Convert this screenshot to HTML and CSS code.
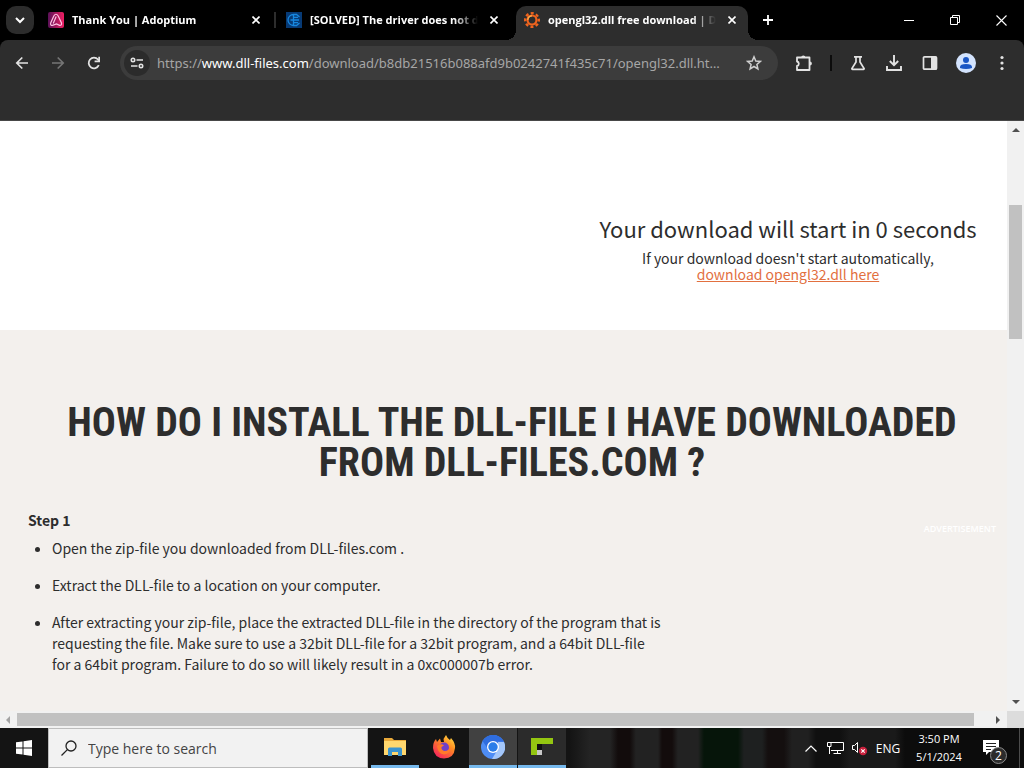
FILE: index.html
```
<!DOCTYPE html>
<html lang="en">
<head>
    <meta charset="UTF-8">
    <meta name="viewport" content="width=device-width, initial-scale=1.0">
    <title>opengl32.dll free download | DLL-files.com</title>
    <link rel="stylesheet" href="styles.css">
</head>
<body>
    <!-- Tab strip -->
    <header class="tab-strip">
        <button class="tab-search" aria-label="Search tabs">
            <svg width="10" height="10" viewBox="0 0 10 10"><path d="M1 3l4 4 4-4" fill="none" stroke="#fff" stroke-width="2"/></svg>
        </button>
        <div class="tabs">
            <div class="tab">
                <svg class="favicon" viewBox="0 0 16 16">
                    <defs><linearGradient id="adopt" x1="0" x2="1"><stop offset="0" stop-color="#5a1158"/><stop offset="1" stop-color="#ee1f62"/></linearGradient></defs>
                    <rect width="16" height="16" rx="2" fill="url(#adopt)"/>
                    <path d="M5.800 4Q8 .5 10.200 4L13.500 11Q14 13.500 11.500 13.300L8.500 12 4.500 13.400Q2 13.400 2.700 11zM8.200 4.500L5.200 11.500" fill="none" stroke="#ffc2e2" stroke-width="1.200"/>
                </svg>
                <span class="tab-title">Thank You | Adoptium</span>
                <button class="tab-close" aria-label="Close tab"><svg width="8" height="8" viewBox="0 0 8 8"><path d="M.5.5l7 7M7.500.5l-7 7" stroke="#fff" stroke-width="1.600"/></svg></button>
            </div>
            <span class="tab-divider"></span>
            <div class="tab">
                <svg class="favicon" viewBox="0 0 16 16">
                    <rect width="16" height="16" fill="#073a75"/>
                    <path d="M7.500 2.500A5.500 5.500 0 0 0 7.500 13.500zM7.500 2.500H10.500L13.500 5M7.500 5.300H12M4.500 8H13M7.500 10.700H12M7.500 13.500H10.500L13.500 11" fill="none" stroke="#1787df" stroke-width="1.300"/>
                </svg>
                <span class="tab-title">[SOLVED] The driver does not detect</span>
                <button class="tab-close" aria-label="Close tab"><svg width="8" height="8" viewBox="0 0 8 8"><path d="M.5.5l7 7M7.500.5l-7 7" stroke="#fff" stroke-width="1.600"/></svg></button>
            </div>
            <span class="tab-divider tab-divider-hidden"></span>
            <div class="tab tab-active">
                <svg class="favicon" viewBox="0 0 16 16">
                    <circle cx="8" cy="8" r="4.500" fill="none" stroke="#f0641e" stroke-width="2.200"/>
                    <circle cx="8" cy="8" r="6.800" fill="none" stroke="#f0641e" stroke-width="2.400" stroke-dasharray="3 2.340" stroke-dashoffset="1.500"/>
                    <path d="M8 3.800a4.200 4.200 0 0 0-4.200 4.200" fill="none" stroke="#ffb04a" stroke-width="1.200"/>
                </svg>
                <span class="tab-title">opengl32.dll free download | DLL-files.com</span>
                <button class="tab-close" aria-label="Close tab"><svg width="8" height="8" viewBox="0 0 8 8"><path d="M.5.5l7 7M7.500.5l-7 7" stroke="#fff" stroke-width="1.600"/></svg></button>
            </div>
        </div>
        <button class="new-tab" aria-label="New tab"><svg width="12" height="12" viewBox="0 0 12 12"><path d="M6 1v10M1 6h10" stroke="#fff" stroke-width="1.800"/></svg></button>
        <div class="window-controls">
            <button aria-label="Minimize"><svg width="10" height="10" viewBox="0 0 10 10"><path d="M0 5.500h10" stroke="#fff"/></svg></button>
            <button aria-label="Restore"><svg width="10" height="10" viewBox="0 0 10 10"><path d="M.5 2.500h7v7h-7zM2.500 2.500v-2h7v7h-2" fill="none" stroke="#fff"/></svg></button>
            <button aria-label="Close"><svg width="11" height="11" viewBox="0 0 11 11"><path d="M.5.5l10 10M10.500.5l-10 10" stroke="#fff" stroke-width="1.100"/></svg></button>
        </div>
    </header>

    <!-- Address bar and extensions -->
    <div class="chrome">
        <nav class="toolbar">
            <button aria-label="Back"><svg width="14" height="14" viewBox="0 0 14 14"><path d="M13 7H2M7.300 1.500L1.800 7l5.500 5.500" fill="none" stroke="#e3e3e3" stroke-width="1.700"/></svg></button>
            <button aria-label="Forward"><svg width="14" height="14" viewBox="0 0 14 14"><path d="M1 7h11M6.700 1.500L12.200 7l-5.500 5.500" fill="none" stroke="#757575" stroke-width="1.700"/></svg></button>
            <button aria-label="Reload"><svg width="14" height="14" viewBox="0 0 14 14"><path d="M11.800 9.200A5.300 5.300 0 1 1 11 3.500L12 4.600" fill="none" stroke="#e3e3e3" stroke-width="1.800"/><path d="M13 .8v5.400H7.600V4.500h3.700V.8z" fill="#e3e3e3"/></svg></button>
            <div class="omnibox">
                <button class="site-info" aria-label="Site information"><svg width="14" height="12" viewBox="0 0 14 12"><g fill="none" stroke="#e3e3e3" stroke-width="1.600"><circle cx="3" cy="3" r="1.700"/><path d="M6.500 3H13M1 9h6.500"/><circle cx="11" cy="9" r="1.700"/></g></svg></button>
                <a class="url" href="#">https://<span class="host">www.dll-files.com</span>/download/b8db21516b088afd9b0242741f435c71/opengl32.dll.html</a>
                <button class="bookmark" aria-label="Bookmark this tab"><svg width="16" height="16" viewBox="0 0 16 16"><path d="M8 1.800l1.800 4.200 4.500.4-3.400 3 1 4.500L8 11.500l-3.900 2.400 1-4.500-3.400-3 4.500-.4z" fill="none" stroke="#cfcfcf" stroke-width="1.500"/></svg></button>
            </div>
            <button aria-label="Extensions"><svg width="18" height="18" viewBox="0 0 18 18"><path d="M2 3.500H14.500V16H2V12A2.300 2.300 0 0 0 2 7.500z" fill="none" stroke="#e3e3e3" stroke-width="1.800" stroke-linejoin="round"/><path d="M6.200 3.500a2.100 2.100 0 0 1 4.200 0zM14.800 7.400a2.100 2.100 0 0 1 0 4.200z" fill="#e3e3e3"/></svg></button>
            <span class="toolbar-divider"></span>
            <button aria-label="Experiments"><svg width="16" height="16" viewBox="0 0 16 16"><path d="M4 1.800h8M6 2v5L1.900 13.500Q1.700 14.300 2.500 14.300H13.500Q14.300 14.300 14.100 13.500L10 7V2" fill="none" stroke="#e3e3e3" stroke-width="1.700"/></svg></button>
            <button aria-label="Downloads"><svg width="16" height="16" viewBox="0 0 16 16"><path d="M8 0v9.500M3.800 6L8 10.200 12.200 6M1 11v4h14v-4" fill="none" stroke="#e3e3e3" stroke-width="1.900"/></svg></button>
            <button aria-label="Side panel"><svg width="16" height="16" viewBox="0 0 16 16"><rect x="1.500" y="1.800" width="13" height="12.400" rx="1" fill="none" stroke="#e3e3e3" stroke-width="1.700"/><path d="M9 1.800h5.500v12.400H9z" fill="#e3e3e3"/></svg></button>
            <button aria-label="Profile"><svg width="20" height="20" viewBox="0 0 20 20"><circle cx="10" cy="10" r="10" fill="#d3e3fd"/><circle cx="10" cy="7" r="3" fill="#1a56c4"/><path d="M4 15v-1Q4 11 10 11t6 3v1q-2.500 1-6 1t-6-1z" fill="#1a56c4"/></svg></button>
            <button aria-label="Menu"><svg width="4" height="16" viewBox="0 0 4 16"><g fill="#e3e3e3"><circle cx="2" cy="2.500" r="1.600"/><circle cx="2" cy="8" r="1.600"/><circle cx="2" cy="13.500" r="1.600"/></g></svg></button>
        </nav>
    </div>

    <!-- Page -->
    <div class="viewport">
        <main class="page">
            <section class="download">
                <div class="download-text">
                    <h2>Your download will start in 0 seconds</h2>
                    <p>If your download doesn't start automatically,<br><a href="#">download opengl32.dll here</a></p>
                </div>
            </section>
            <section class="install">
                <h1>How do I install the DLL-file I have downloaded from DLL-files.com ?</h1>
                <div class="install-body">
                    <div class="steps">
                        <h3>Step 1</h3>
                        <ul>
                            <li>Open the zip-file you downloaded from DLL-files.com .</li>
                            <li>Extract the DLL-file to a location on your computer.</li>
                            <li>After extracting your zip-file, place the extracted DLL-file in the directory of the program that is requesting the file. Make sure to use a 32bit DLL-file for a 32bit program, and a 64bit DLL-file for a 64bit program. Failure to do so will likely result in a 0xc000007b error.</li>
                        </ul>
                    </div>
                    <div class="ad-label">ADVERTISEMENT</div>
                </div>
            </section>
        </main>
        <div class="scroll-y">
            <svg width="8" height="4" viewBox="0 0 8 4"><path d="M0 4l4-4 4 4z" fill="#505050"/></svg>
            <div class="track-y"><div class="thumb-y"></div></div>
            <svg width="8" height="4" viewBox="0 0 8 4"><path d="M0 0l4 4 4-4z" fill="#505050"/></svg>
        </div>
        <div class="scroll-x">
            <svg width="4" height="8" viewBox="0 0 4 8"><path d="M4 0L0 4l4 4z" fill="#a3a3a3"/></svg>
            <div class="track-x"><div class="thumb-x"></div></div>
            <svg width="4" height="8" viewBox="0 0 4 8"><path d="M0 0l4 4-4 4z" fill="#505050"/></svg>
        </div>
        <div class="scroll-corner"></div>
    </div>

    <!-- Windows taskbar -->
    <footer class="taskbar">
        <button class="start" aria-label="Start"><svg width="16" height="16" viewBox="0 0 16 16"><path d="M0 2.300L6.500 1.400V7.500H0zM7.500 1.200L16 0V7.500H7.500zM0 8.500H6.500V14.600L0 13.700zM7.500 8.500H16V16L7.500 14.800z" fill="#fff"/></svg></button>
        <label class="search">
            <svg width="18" height="18" viewBox="0 0 18 18"><circle cx="11" cy="7" r="5" fill="none" stroke="#222" stroke-width="1.300"/><path d="M7.400 10.600L1.500 16.500" stroke="#222" stroke-width="1.300"/></svg>
            <input type="text" placeholder="Type here to search" aria-label="Type here to search">
        </label>
        <div class="apps">
            <button class="app app-running" aria-label="File Explorer"><svg width="24" height="24" viewBox="0 0 24 24"><path d="M1 3H9L11 5H23V20H1z" fill="#e9a93a"/><path d="M1 6H23V20H1z" fill="#ffd76e"/><path d="M5 21V14Q5 12.500 6.500 12.500H17.500Q19 12.500 19 14V21H15V17H9V21z" fill="#3b94cf"/></svg></button>
            <button class="app" aria-label="Firefox"><svg width="24" height="24" viewBox="0 0 24 24">
                <defs><linearGradient id="fox" x1="1" y1="0" x2=".3" y2="1"><stop offset="0" stop-color="#fff04a"/><stop offset=".45" stop-color="#ff8a22"/><stop offset="1" stop-color="#f5275a"/></linearGradient></defs>
                <path d="M1 13Q1 7 4 4L5 7 8 3.500 9 7H12L11.500 4 14 0Q15 3 18 5L19 3Q23.500 8 23 13 22 23.500 12 23.500 2 23 1 13z" fill="url(#fox)"/>
                <circle cx="12" cy="12.500" r="5" fill="#7140c8"/>
                <path d="M5 11Q9 8 12 10.500L9.500 12Q9 15 12.500 16 17 16 18 12 19 19 12 19.500 6 19 5 11z" fill="#ff7a2a"/></svg></button>
            <button class="app app-running app-focused" aria-label="Chromium"><svg width="24" height="24" viewBox="0 0 24 24"><circle cx="12" cy="12" r="12" fill="#4e8df5"/><path d="M12 0A12 12 0 0 1 23.400 8H12z" fill="#3b78e7"/><path d="M23 7A12 12 0 0 1 11 24L17 14V7z" fill="#a4c7fa"/><path d="M1.600 6A12 12 0 0 1 22.400 6H12L7 14z" fill="#2f6ddf"/><circle cx="12" cy="12" r="6" fill="#fff"/><circle cx="12" cy="12" r="4.700" fill="#2b7de9"/></svg></button>
            <button class="app app-running app-open" aria-label="Crafting tool"><svg width="24" height="20" viewBox="0 0 24 20"><path d="M1 1H23V7H12V18H1z" fill="#94c611"/><path d="M7 7H12V13H7z" fill="#101010"/><path d="M7 13H12V18H7z" fill="#c8c8c8"/></svg></button>
        </div>
        <div class="tray">
            <button aria-label="Show hidden icons"><svg width="12" height="7" viewBox="0 0 12 7"><path d="M.5 6.500L6 1l5.500 5.500" fill="none" stroke="#fff" stroke-width="1.200"/></svg></button>
            <button aria-label="Network"><svg width="17" height="14" viewBox="0 0 17 14"><path d="M4 1.500H16.500V9.500H4M10.500 9.500V12.500M6.500 12.500H14M.5 1.500H4V5.500H.5zM2.500 5.500V13" fill="none" stroke="#fff"/></svg></button>
            <button aria-label="Volume"><svg width="17" height="16" viewBox="0 0 17 16"><path d="M1.500 5.500H3.500L6.500 2.500V12.500L3.500 9.500H1.500z" fill="none" stroke="#fff"/><circle cx="12" cy="11" r="4.200" fill="#c9213d"/><path d="M10.300 9.300l3.400 3.400M13.700 9.300l-3.400 3.400" stroke="#fff" stroke-width="1.100"/></svg></button>
            <span class="lang">ENG</span>
            <time class="clock"><span>3:50 PM</span><span>5/1/2024</span></time>
            <button class="notifications" aria-label="Notifications"><svg width="16" height="16" viewBox="0 0 16 16"><path d="M0 0H16V12H6L3 15V12H0z" fill="#fff"/><path d="M3 3.500H13M3 6.500H13M3 9.500H8" stroke="#222"/></svg><span class="badge">2</span></button>
        </div>
    </footer>
</body>
</html>
```
FILE: styles.css
```
* {
    box-sizing: border-box;
}

body {
    margin: 0;
    height: 100vh;
    display: flex;
    flex-direction: column;
    overflow: hidden;
    background-color: #000;
    font-family: "Open Sans", sans-serif;
}

button {
    display: flex;
    align-items: center;
    justify-content: center;
    flex-shrink: 0;
    padding: 0;
    border: 0;
    background: none;
    font-family: inherit;
}

/* Tab strip */
.tab-strip {
    display: flex;
    height: 40px;
    padding-top: 6px;
    color: #fff;
}

.tab-search {
    width: 28px;
    height: 28px;
    margin: 0 6px;
    border-radius: 10px;
    background-color: #2c2c2c;
}

.tabs {
    display: flex;
    flex: 0 1 708px;
    min-width: 0;
}

.tab {
    display: flex;
    align-items: center;
    flex: 1;
    gap: 8px;
    min-width: 0;
    height: 34px;
    padding: 0 8px 6px;
}

.tab-active {
    position: relative;
    background-color: #2d2d2d;
    border-radius: 10px 10px 0 0;
}

/* Curved feet of the active tab */
.tab-active::before,
.tab-active::after {
    content: "";
    position: absolute;
    bottom: 0;
    width: 10px;
    height: 10px;
}

.tab-active::before {
    right: 100%;
    background: radial-gradient(circle at 0 0, transparent 10px, #2d2d2d 10px);
}

.tab-active::after {
    left: 100%;
    background: radial-gradient(circle at 100% 0, transparent 10px, #2d2d2d 10px);
}

.tab-divider {
    width: 2px;
    height: 16px;
    margin: 6px 2px;
    background-color: #2d2d2d;
}

.tab-divider-hidden {
    visibility: hidden;
}

.favicon {
    width: 16px;
    height: 16px;
    flex-shrink: 0;
}

.tab-title {
    flex: 1;
    overflow: hidden;
    white-space: nowrap;
    font-size: 11px;
    font-weight: 700;
    line-height: 16px;
    mask-image: linear-gradient(to right, #000 144px, transparent);
}

.tab-close {
    width: 16px;
    height: 16px;
}

.new-tab {
    width: 28px;
    height: 28px;
    margin-left: 6px;
}

.window-controls {
    display: flex;
    margin-left: auto;
}

.window-controls button {
    width: 46px;
    height: 28px;
}

/* Toolbar */
.chrome {
    height: 81px;
    flex-shrink: 0;
    background-color: #2d2d2d;
    border-radius: 8px 8px 0 0;
    border-bottom: 1px solid #474747;
}

.toolbar {
    display: flex;
    align-items: center;
    padding: 6px 4px;
}

.toolbar > button {
    width: 36px;
    height: 34px;
}

.omnibox {
    display: flex;
    align-items: center;
    flex: 1;
    min-width: 0;
    height: 34px;
    margin: 0 8px;
    padding: 0 16px 0 4px;
    border-radius: 17px;
    background-color: #3c3c3c;
}

.site-info {
    width: 26px;
    height: 26px;
    border-radius: 50%;
    background-color: #2b2b2b;
}

.url {
    flex: 1;
    margin: 0 24px 0 7px;
    overflow: hidden;
    text-overflow: ellipsis;
    white-space: nowrap;
    color: #a6a6a6;
    font-family: "Noto Sans", sans-serif;
    font-size: 13px;
    line-height: 20px;
    text-decoration: none;
}

.host {
    color: #fff;
}

.toolbar-divider {
    width: 2px;
    height: 16px;
    margin: 0 8px;
    background-color: #0c0c0c;
}

/* Page */
.viewport {
    display: grid;
    grid-template-columns: 1fr 17px;
    grid-template-rows: 1fr 17px;
    flex: 1;
    min-height: 0;
    background-color: #f1f1f1;
}

.page {
    display: flex;
    flex-direction: column;
    overflow: hidden;
    color: #2d2d2d;
    background-color: #f3f0ed;
    font-family: "Noto Sans CJK JP", sans-serif;
}

.download {
    display: flex;
    justify-content: flex-end;
    padding: 92px 19px 48px;
    background-color: #fff;
}

.download-text {
    width: 400px;
    text-align: center;
}

.download h2 {
    margin: 0 0 6px;
    font-size: 22px;
    font-weight: 400;
    line-height: 31px;
}

.download p {
    margin: 0;
    font-size: 14px;
    line-height: 16px;
}

.download a {
    color: #e2703f;
}

.install {
    flex: 1;
    padding: 73px 11px 0 28px;
}

.install h1 {
    margin: 0 0 27px;
    text-align: center;
    text-transform: uppercase;
    font-family: "Roboto Condensed", Roboto, sans-serif;
    font-size: 40px;
    font-weight: 700;
    line-height: 40px;
}

.install-body {
    display: flex;
    justify-content: space-between;
}

.steps {
    flex: 0 1 637px;
    font-size: 14px;
    line-height: 21px;
}

.steps h3 {
    margin: 0 0 7px;
    font-size: 14px;
}

.steps ul {
    margin: 0;
    padding-left: 24px;
}

.steps li {
    margin-bottom: 16px;
}

.ad-label {
    padding-top: 12px;
    color: #fff;
    font-family: "Open Sans", sans-serif;
    font-size: 9px;
    font-weight: 600;
    line-height: 14px;
}

/* Scrollbars */
.scroll-y {
    display: flex;
    flex-direction: column;
    align-items: center;
    padding: 7px 0;
}

.track-y {
    flex: 1;
    width: 13px;
    padding-top: 73px;
    display: flex;
    flex-direction: column;
}

.thumb-y {
    height: 27%;
    background-color: #c1c1c1;
}

.scroll-x {
    display: flex;
    align-items: center;
    padding: 0 7px 0 6px;
}

.track-x {
    flex: 1;
    height: 13px;
    margin: 0 7px;
    padding-right: 15px;
}

.thumb-x {
    height: 100%;
    background-color: #c1c1c1;
}

.scroll-corner {
    background-color: #dcdcdc;
}

/* Taskbar */
.taskbar {
    display: flex;
    height: 40px;
    flex-shrink: 0;
    color: #fff;
    background: linear-gradient(to right,
        #141414 570px, #242424 590px 610px, #120c0c 618px 630px,
        #222 636px 658px, #130c0c 662px 672px, #222 678px 698px,
        #06150a 704px 738px, #1e2020 744px 762px, #140f0f 768px 784px,
        #202020 792px 808px, #101010 816px 840px, #1a1a1a 850px 895px, #0c0c0c 905px);
}

.start {
    width: 48px;
}

.search {
    display: flex;
    align-items: center;
    width: 320px;
    padding: 0 11px;
    gap: 10px;
    border: 1px solid #bdbdbd;
    background-color: #f2f2f2;
}

.search input {
    flex: 1;
    min-width: 0;
    padding: 0;
    border: 0;
    background: none;
    font-family: "Open Sans", sans-serif;
    font-size: 14px;
}

.search input::placeholder {
    color: #444;
}

.apps {
    display: flex;
    gap: 1px;
    padding-left: 3px;
}

.app {
    width: 48px;
    border-bottom: 3px solid transparent;
}

.app-running {
    border-bottom-color: #76b9ed;
}

.app-focused {
    background-color: #414141;
}

.app-open {
    background-color: #2b2b2b;
}

.tray {
    display: flex;
    align-items: center;
    margin-left: auto;
    padding-right: 4px;
    font-size: 12px;
}

.tray button {
    width: 24px;
    height: 40px;
}

.lang {
    width: 34px;
    text-align: center;
}

.clock {
    display: flex;
    flex-direction: column;
    width: 68px;
    text-align: center;
    font-size: 11px;
    line-height: 18px;
}

.tray .notifications {
    position: relative;
    width: 47px;
    padding-right: 10px;
    border-right: 1px solid #4c4c4c;
}

.badge {
    position: absolute;
    right: 12px;
    bottom: 4px;
    width: 17px;
    height: 17px;
    border: 1px solid #8a8a8a;
    border-radius: 50%;
    background-color: #2c2c2c;
    color: #fff;
    font-size: 12px;
    line-height: 15px;
}
```
